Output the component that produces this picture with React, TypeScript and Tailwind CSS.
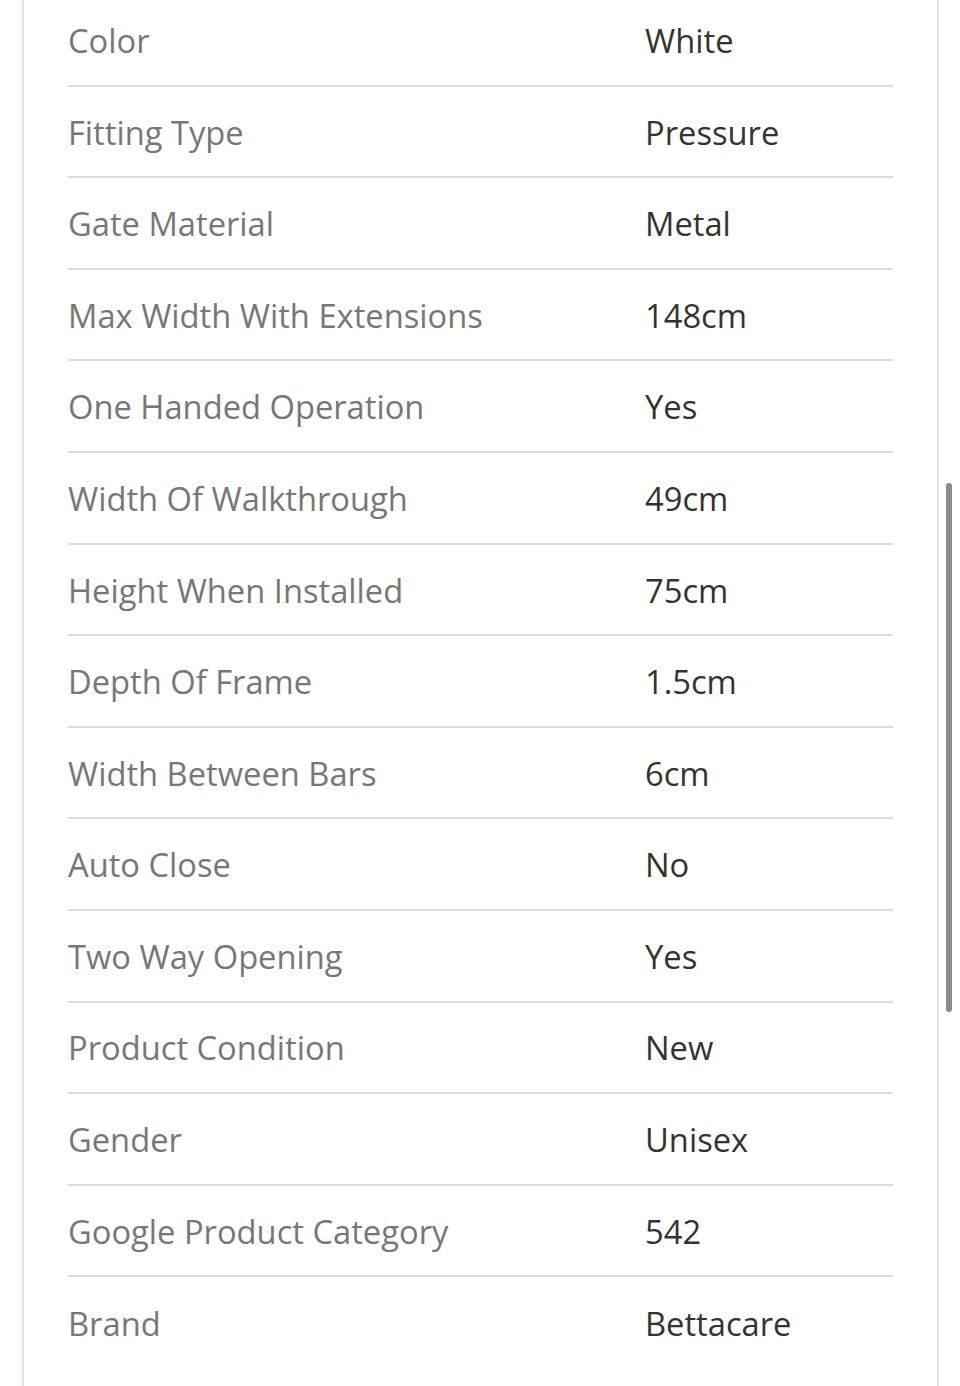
const specs: [string, string][] = [
  ['Color', 'White'],
  ['Fitting Type', 'Pressure'],
  ['Gate Material', 'Metal'],
  ['Max Width With Extensions', '148cm'],
  ['One Handed Operation', 'Yes'],
  ['Width Of Walkthrough', '49cm'],
  ['Height When Installed', '75cm'],
  ['Depth Of Frame', '1.5cm'],
  ['Width Between Bars', '6cm'],
  ['Auto Close', 'No'],
  ['Two Way Opening', 'Yes'],
  ['Product Condition', 'New'],
  ['Gender', 'Unisex'],
  ['Google Product Category', '542'],
  ['Brand', 'Bettacare'],
]

export default function App() {
  return (
    <div className="relative w-[960px] h-[1386px] overflow-hidden bg-white font-['Open_Sans',sans-serif]">
      <div className="ml-[22px] w-[917px] h-[1400px] border-x-2 border-[#e4e4e4] px-[44px] -mt-[5px]">
        {specs.map(([label, value], i) => (
          <div
            key={label}
            className={`grid grid-cols-[577px_1fr] items-center h-[91.6px] pt-[3px] text-[32.7px] leading-none ${
              i < specs.length - 1 ? 'border-b-2 border-[#dcdcdc]' : ''
            }`}
          >
            <span className="text-[#777777]">{label}</span>
            <span className="text-[#333333]">{value}</span>
          </div>
        ))}
      </div>
      <div className="absolute left-[946px] top-[483px] w-[6px] h-[529px] rounded-full bg-[#8a8a8a]" />
    </div>
  )
}
